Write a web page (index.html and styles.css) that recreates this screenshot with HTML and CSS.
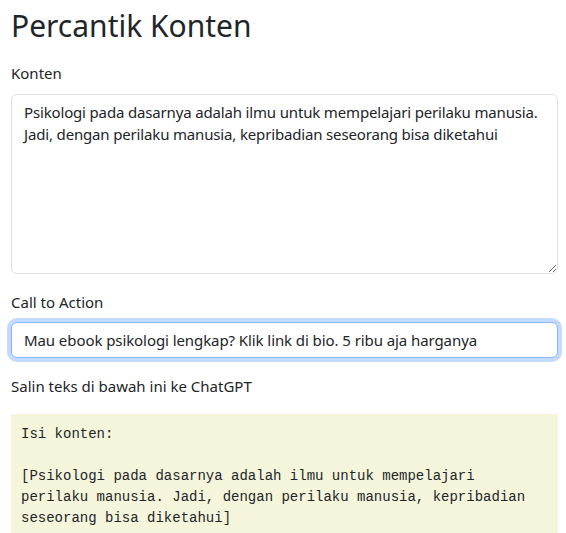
FILE: index.html
```html
<!DOCTYPE html>
<html lang="id">
<head>
<meta charset="utf-8">
<title>Percantik Konten</title>
<link rel="stylesheet" href="styles.css">
</head>
<body>
<div class="page">
  <h1 class="title">Percantik Konten</h1>
  <div class="group">
    <label class="label" for="konten">Konten</label>
    <textarea id="konten" class="field area">Psikologi pada dasarnya adalah ilmu untuk mempelajari perilaku manusia. Jadi, dengan perilaku manusia, kepribadian seseorang bisa diketahui</textarea>
  </div>
  <div class="group">
    <label class="label" for="cta">Call to Action</label>
    <input id="cta" class="field input focus" type="text" value="Mau ebook psikologi lengkap? Klik link di bio. 5 ribu aja harganya">
  </div>
  <p class="label copy">Salin teks di bawah ini ke ChatGPT</p>
  <pre class="output">Isi konten:

[Psikologi pada dasarnya adalah ilmu untuk mempelajari
perilaku manusia. Jadi, dengan perilaku manusia, kepribadian
seseorang bisa diketahui]</pre>
</div>
</body>
</html>
```
FILE: styles.css
```css
* { box-sizing: border-box; }
html, body { margin: 0; padding: 0; background: #fff; }
body {
  font-family: "Noto Sans", "DejaVu Sans", sans-serif;
  font-size: 15px;
  line-height: 1.5;
  color: #212529;
}
.page {
  padding: 8px 8px 0 11px;
  display: flex;
  flex-direction: column;
}
.title {
  font-size: 30px;
  font-weight: 400;
  line-height: 1.2;
  margin: 0 0 18px;
}
.group {
  display: flex;
  flex-direction: column;
  margin-bottom: 17px;
}
.label {
  display: block;
  margin: 0 0 9px;
}
.field {
  font: inherit;
  color: #212529;
  background: #fff;
  border: 1px solid #dee2e6;
  border-radius: 6px;
  padding: 6px 12px;
  width: 100%;
  margin: 0;
}
.area {
  height: 180px;
  resize: vertical;
  letter-spacing: -0.16px;
}
.input {
  height: 36px;
  line-height: 1.5;
  letter-spacing: -0.08px;
}
.focus {
  border-color: #86b7fe;
  box-shadow: 0 0 0 4px rgba(13, 110, 253, 0.25);
  outline: none;
}
.copy { margin-bottom: 16px; }
.output {
  margin: 0;
  background: #f5f5dc;
  padding: 10px;
  font-family: "Liberation Mono", monospace;
  font-size: 14px;
  line-height: 21px;
  white-space: pre-wrap;
}
```
